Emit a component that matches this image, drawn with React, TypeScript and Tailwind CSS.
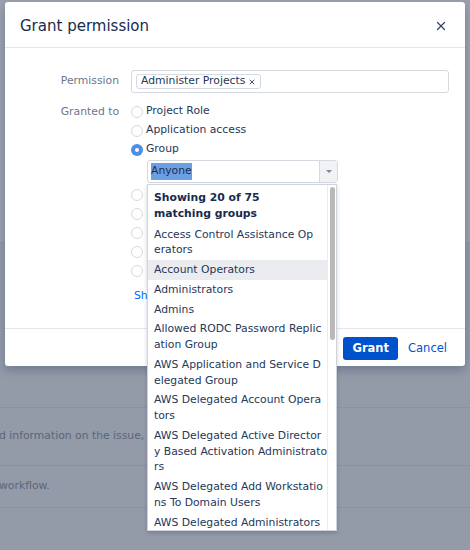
import { Fragment } from 'react';
import { X } from 'lucide-react';

// line breaks follow the list's narrow column (it breaks inside words)
const groups: string[][] = [
  ['Access Control Assistance Op', 'erators'],
  ['Account Operators'],
  ['Administrators'],
  ['Admins'],
  ['Allowed RODC Password Replic', 'ation Group'],
  ['AWS Application and Service D', 'elegated Group'],
  ['AWS Delegated Account Opera', 'tors'],
  ['AWS Delegated Active Director', 'y Based Activation Administrato', 'rs'],
  ['AWS Delegated Add Workstatio', 'ns To Domain Users'],
  ['AWS Delegated Administrators'],
];

const Radio = ({ checked = false }: { checked?: boolean }) =>
  checked ? (
    <span className="flex h-[12px] w-[12px] shrink-0 items-center justify-center rounded-full bg-[#4a8fe8]">
      <span className="h-[4px] w-[4px] rounded-full bg-white" />
    </span>
  ) : (
    <span className="h-[12px] w-[12px] shrink-0 rounded-full border border-[#d5d9e0] bg-white" />
  );

const RadioRow = ({ label, checked }: { label?: string; checked?: boolean }) => (
  <div className="flex h-[19px] items-center gap-[3px]">
    <Radio checked={checked} />
    {label && <span>{label}</span>}
  </div>
);

const GroupDropdown = () => (
  <div className="absolute left-[142px] top-[182px] h-[347px] w-[190px] overflow-hidden border border-[#cfd3da] bg-white shadow-[0_2px_4px_rgba(9,30,66,0.2)]">
    <div className="flex h-full">
      <div className="w-[179px] text-[10.8px] leading-[15.75px] text-[#253858]">
        <div className="pb-[3px] pl-[6px] pr-[20px] pt-[5px] font-bold text-[#172b4d]">
          Showing 20 of 75 matching groups
        </div>
        {groups.map((lines, i) => (
          <div
            key={i}
            className={
              i === 1
                ? 'whitespace-nowrap bg-[#ebecf0] py-[2px] pl-[6px]'
                : 'whitespace-nowrap py-[2px] pl-[6px]'
            }
          >
            {lines.map((l, j) => (
              <Fragment key={j}>
                {j > 0 && <br />}
                {l}
              </Fragment>
            ))}
          </div>
        ))}
      </div>
      <div className="flex-1 border-l border-[#ebebeb] px-[2px] pt-[2px]">
        <div className="h-[153px] w-[5px] rounded-[3px] bg-[#b9b9b9]" />
      </div>
    </div>
  </div>
);

export default function App() {
  return (
    <div
      className="relative h-[550px] w-[470px] overflow-hidden bg-[#939aa8] text-[10.8px]"
      style={{ fontFamily: '"DejaVu Sans", Verdana, sans-serif' }}
    >
      {/* page behind the dimmed overlay */}
      <div className="flex flex-col">
        <div className="h-[243px] border-b border-[#8c93a2] bg-[#9ba1ae]" />
        <div className="h-[165px] border-b border-[#8a91a0]" />
        <div className="flex h-[58px] items-center border-b border-[#8a91a0] text-[#5d6678]">
          <span className="-ml-[1px]">d information on the issue, such as the summary</span>
        </div>
        <div className="flex h-[42px] items-center border-b border-[#8a91a0] text-[#5d6678]">
          <span className="-ml-[1px]">workflow.</span>
        </div>
      </div>

      {/* modal */}
      <div className="absolute left-[5px] top-[2px] w-[460px] rounded-[3px] bg-white text-[#172b4d] shadow-[0_4px_10px_rgba(9,30,66,0.25)]">
        <div className="flex h-[46px] items-center justify-between border-b border-[#e4e6ea] pl-[15px] pr-[17px] pt-[3px]">
          <h2 className="text-[15px] font-normal text-[#172b4d]">Grant permission</h2>
          <X size={14} strokeWidth={2.2} className="text-[#344563]" />
        </div>

        <div className="flex flex-col pb-[24px] pr-[16px] pt-[22px]">
          <div className="flex items-center gap-[12px]">
            <label className="w-[114px] text-right text-[#6b778c]">Permission</label>
            <div className="flex h-[23px] flex-1 items-center rounded-[3px] border border-[#d5d9e0] px-[4px]">
              <span className="flex h-[15px] items-center gap-[3px] rounded-[3px] border border-[#d5d9e0] px-[4px] text-[#253858]">
                Administer Projects
                <X size={8} strokeWidth={3} className="text-[#42526e]" />
              </span>
            </div>
          </div>

          <div className="mt-[9px] flex gap-[12px]">
            <label className="w-[114px] pt-[2px] text-right leading-[15px] text-[#6b778c]">Granted to</label>
            <div className="flex flex-1 flex-col text-[#253858]">
              <RadioRow label="Project Role" />
              <RadioRow label="Application access" />
              <RadioRow label="Group" checked />
              <div className="ml-[16px] mt-[1px] flex h-[23px] w-[191px] rounded-[3px] border border-[#d5d9e0]">
                <div className="flex flex-1 items-center px-[3px]">
                  <span className="bg-[#6c9ee2] text-[#1d2f52]">Anyone</span>
                </div>
                <div className="flex w-[18px] items-center justify-center border-l border-[#d5d9e0] bg-[#f1f2f4]">
                  <span className="h-0 w-0 border-x-[3px] border-t-[3px] border-x-transparent border-t-[#7a8699]" />
                </div>
              </div>
              <div className="mt-[2px] flex flex-col">
                <RadioRow />
                <RadioRow />
                <RadioRow />
                <RadioRow />
                <RadioRow />
              </div>
              <a className="mt-[8px] pl-[3px] text-[#0065ff]">Show more</a>
            </div>
          </div>
        </div>

        <div className="flex h-[38px] items-center justify-end gap-[10px] border-t border-[#e4e6ea] pr-[18px] pt-[2px]">
          <button type="button" className="h-[23px] rounded-[3px] bg-[#0052cc] px-[9px] text-[11.5px] font-bold text-white">
            Grant
          </button>
          <a className="text-[11.5px] text-[#0052cc]">Cancel</a>
        </div>

        <GroupDropdown />
      </div>
    </div>
  );
}
